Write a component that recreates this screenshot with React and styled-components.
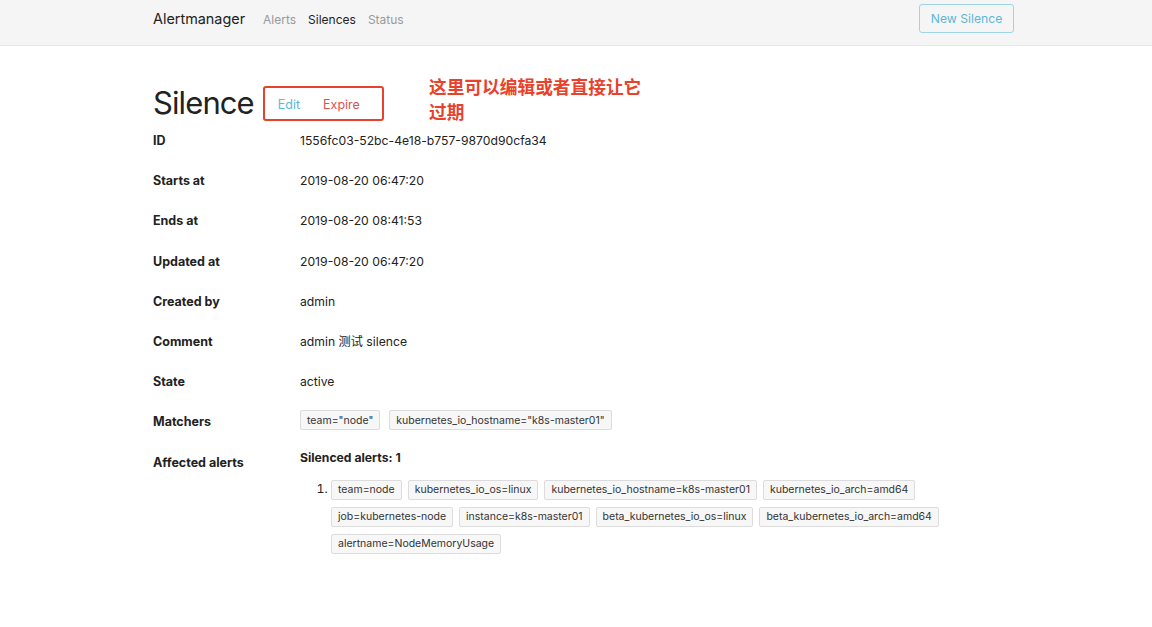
import React from "react";
import styled, { createGlobalStyle } from "styled-components";

const Global = createGlobalStyle`
  html, body { margin: 0; padding: 0; background: #fff; }
  body { font-family: Inter, "Noto Sans CJK SC", sans-serif; color: #212529; }
`;

const NavBar = styled.header`
  height: 46px;
  background: #f5f5f5;
  border-bottom: 1px solid #e6e6e6;
  box-sizing: border-box;
`;

const NavInner = styled.div`
  margin-left: 153px;
  width: 861px;
  padding-top: 4px;
  display: flex;
  align-items: flex-start;
  justify-content: space-between;
`;

const NavLeft = styled.div`
  display: flex;
  align-items: baseline;
  line-height: 29px;
`;

const Brand = styled.span`
  font-size: 14.4px;
  color: #222;
  margin-right: 18px;
`;

const NavLink = styled.span`
  font-size: 12px;
  color: ${(p) => (p.$active ? "#222" : "#999")};
  margin-right: 12px;
`;

const OutlineButton = styled.button`
  font-family: inherit;
  font-size: 12.2px;
  color: #5bb8d6;
  background: transparent;
  border: 1px solid #9fd3e6;
  border-radius: 3px;
  height: 29px;
  width: 95px;
  padding: 0;
`;

const Main = styled.main`
  margin-left: 153px;
  width: 861px;
  padding-top: 37px;
`;

const TitleRow = styled.div`
  display: flex;
  align-items: flex-start;
  position: relative;
  height: 49px;
`;

const Title = styled.h1`
  margin: 0;
  font-size: 31px;
  font-weight: 400;
  line-height: 40px;
  color: #222;
  letter-spacing: -0.9px;
`;

const Highlight = styled.div`
  margin-left: 9px;
  margin-top: 3px;
  width: 121px;
  height: 35px;
  box-sizing: border-box;
  border: 2px solid #e8412c;
  border-radius: 3px;
  display: flex;
  align-items: center;
  padding-left: 13px;
  padding-top: 2px;
  gap: 23px;
`;

const TextAction = styled.span`
  font-size: 12.5px;
  color: ${(p) => p.$color};
`;

const Annotation = styled.div`
  position: absolute;
  left: 276px;
  top: -9px;
  width: 222px;
  font-family: "Noto Sans CJK SC", sans-serif;
  font-weight: 700;
  font-size: 17.7px;
  line-height: 25px;
  color: #e8412c;
`;

const Rows = styled.div`
  display: flex;
  flex-direction: column;
`;

const Row = styled.div`
  display: grid;
  grid-template-columns: 147px 1fr;
  min-height: 40.2px;
  align-items: start;
`;

const Label = styled.div`
  font-size: 12.5px;
  font-weight: 700;
  color: #222;
  line-height: 18px;
`;

const Value = styled.div`
  font-size: 12.2px;
  color: #222;
  line-height: 18px;
`;

const ChipWrap = styled.div`
  display: flex;
  flex-wrap: wrap;
  gap: ${(p) => p.$gap || "7px 6px"};
  margin-top: ${(p) => p.$mt || 0}px;
`;

const Chip = styled.span`
  display: inline-flex;
  align-items: center;
  height: 20px;
  box-sizing: border-box;
  padding: 0 6px;
  font-size: 10.5px;
  color: #333;
  background: #f7f7f7;
  border: 1px solid #dcdcdc;
  border-radius: 2px;
  white-space: nowrap;
`;

const Strong = styled.div`
  font-weight: 700;
  font-size: 12.2px;
  color: #222;
  line-height: 18px;
  margin-top: -5px;
`;

const AlertList = styled.ol`
  margin: 13px 0 0 0;
  padding-left: 31px;
  font-size: 12.2px;
  color: #222;
`;

const AlertItem = styled.li`
  & > div { width: 620px; }
`;

const rows = [
  ["ID", "1556fc03-52bc-4e18-b757-9870d90cfa34"],
  ["Starts at", "2019-08-20 06:47:20"],
  ["Ends at", "2019-08-20 08:41:53"],
  ["Updated at", "2019-08-20 06:47:20"],
  ["Created by", "admin"],
  ["Comment", "admin 测试 silence"],
  ["State", "active"],
];

const matchers = ['team="node"', 'kubernetes_io_hostname="k8s-master01"'];

const labels = [
  "team=node",
  "kubernetes_io_os=linux",
  "kubernetes_io_hostname=k8s-master01",
  "kubernetes_io_arch=amd64",
  "job=kubernetes-node",
  "instance=k8s-master01",
  "beta_kubernetes_io_os=linux",
  "beta_kubernetes_io_arch=amd64",
  "alertname=NodeMemoryUsage",
];

export default function App() {
  return (
    <>
      <Global />
      <NavBar>
        <NavInner>
          <NavLeft>
            <Brand>Alertmanager</Brand>
            <NavLink>Alerts</NavLink>
            <NavLink $active>Silences</NavLink>
            <NavLink>Status</NavLink>
          </NavLeft>
          <OutlineButton>New Silence</OutlineButton>
        </NavInner>
      </NavBar>
      <Main>
        <TitleRow>
          <Title>Silence</Title>
          <Highlight>
            <TextAction $color="#5bb8d6">Edit</TextAction>
            <TextAction $color="#d9534f">Expire</TextAction>
          </Highlight>
          <Annotation>这里可以编辑或者直接让它过期</Annotation>
        </TitleRow>
        <Rows>
          {rows.map(([k, v]) => (
            <Row key={k}>
              <Label>{k}</Label>
              <Value>{v}</Value>
            </Row>
          ))}
          <Row>
            <Label>Matchers</Label>
            <ChipWrap $gap="7px 9px" $mt={-3}>
              {matchers.map((m) => (
                <Chip key={m}>{m}</Chip>
              ))}
            </ChipWrap>
          </Row>
          <Row>
            <Label>Affected alerts</Label>
            <div>
              <Strong>Silenced alerts: 1</Strong>
              <AlertList>
                <AlertItem>
                  <ChipWrap>
                    {labels.map((l) => (
                      <Chip key={l}>{l}</Chip>
                    ))}
                  </ChipWrap>
                </AlertItem>
              </AlertList>
            </div>
          </Row>
        </Rows>
      </Main>
    </>
  );
}
